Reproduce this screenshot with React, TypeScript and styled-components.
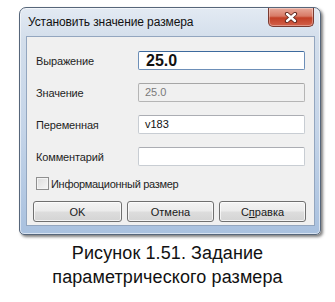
import React from "react";
import styled, { createGlobalStyle } from "styled-components";

const GlobalStyle = createGlobalStyle`
  html, body {
    margin: 0;
    padding: 0;
    background: #ffffff;
  }
  body {
    font-family: "Liberation Sans", Arial, sans-serif;
  }
`;

const Page = styled.div`
  width: 335px;
  height: 302px;
  overflow: hidden;
  background: #ffffff;
`;

const Window = styled.div`
  box-sizing: border-box;
  width: 302px;
  height: 228px;
  margin: 7px 0 0 19px;
  border: 1px solid #56667a;
  border-radius: 7px 7px 5px 5px;
  background: linear-gradient(
    to bottom,
    #e3eaf3 0%,
    #d3deeb 14%,
    #c4d4e8 55%,
    #a9c1df 100%
  );
  box-shadow: inset 0 0 0 1px rgba(255, 255, 255, 0.55),
    2px 2px 3px rgba(0, 0, 0, 0.5);
  display: flex;
  flex-direction: column;
`;

const TitleBar = styled.div`
  height: 28px;
  display: flex;
  justify-content: space-between;
  align-items: flex-start;
  padding: 0 6px 0 8px;
`;

const Title = styled.div`
  font-size: 12px;
  color: #111111;
  line-height: 28px;
  letter-spacing: -0.1px;
`;

const CloseButton = styled.div`
  width: 46px;
  height: 19px;
  box-sizing: border-box;
  border: 1px solid #7a3a30;
  border-top: none;
  border-radius: 0 0 5px 5px;
  background: linear-gradient(
    to bottom,
    #e8a99a 0%,
    #d87a66 45%,
    #c23f26 55%,
    #d2614a 100%
  );
  box-shadow: inset 0 0 0 1px rgba(255, 255, 255, 0.35);
  display: flex;
  align-items: center;
  justify-content: center;
`;

const Body = styled.div`
  padding: 0 5px 8px 6px;
`;

const Panel = styled.div`
  box-sizing: border-box;
  height: 190px;
  border: 1px solid #93a6bf;
  background: #f0f0f0;
  padding: 14px 9px 0 9px;
  display: flex;
  flex-direction: column;
`;

const Fields = styled.div`
  display: grid;
  grid-template-columns: 102px 1fr;
  row-gap: 13px;
  align-items: center;
`;

const Label = styled.div`
  font-size: 11px;
  color: #1e1e1e;
  letter-spacing: -0.15px;
`;

const Input = styled.div<{ $disabled?: boolean; $focused?: boolean; $big?: boolean }>`
  box-sizing: border-box;
  height: 19px;
  border: 1px solid
    ${(p) => (p.$focused ? "#6d8fb8" : p.$disabled ? "#b5b5b5" : "#c8cdd3")};
  border-top-color: ${(p) =>
    p.$focused ? "#3d6a9e" : p.$disabled ? "#a6a6a6" : "#abadb3"};
  border-radius: 2px;
  background: ${(p) => (p.$disabled ? "#f0f0f0" : "#ffffff")};
  color: ${(p) => (p.$disabled ? "#7a7a7a" : "#111111")};
  font-size: ${(p) => (p.$big ? "16px" : "11px")};
  font-weight: ${(p) => (p.$big ? 700 : 400)};
  line-height: 17px;
  padding-left: ${(p) => (p.$big ? "7px" : "6px")};
`;

const CheckRow = styled.label`
  display: flex;
  align-items: center;
  gap: 2px;
  margin-top: 11px;
  font-size: 11px;
  letter-spacing: -0.3px;
  color: #1e1e1e;
`;

const CheckBox = styled.span`
  box-sizing: border-box;
  width: 13px;
  height: 13px;
  border: 1px solid #8f8f8f;
  background: linear-gradient(135deg, #dcdcdc 0%, #f6f6f6 100%);
  box-shadow: inset 0 0 0 1px #f4f4f4;
`;

const Buttons = styled.div`
  display: grid;
  grid-template-columns: 89px 87px 87px;
  justify-content: space-between;
  margin: 11px -1px 0 -3px;
`;

const Button = styled.div`
  box-sizing: border-box;
  height: 21px;
  border: 1px solid #707070;
  border-radius: 3px;
  background: linear-gradient(
    to bottom,
    #f4f4f4 0%,
    #ebebeb 48%,
    #dddddd 52%,
    #d4d4d4 100%
  );
  box-shadow: inset 0 0 0 1px rgba(255, 255, 255, 0.7);
  font-size: 11px;
  color: #1a1a1a;
  display: flex;
  align-items: center;
  justify-content: center;
`;

const Caption = styled.div`
  margin-top: 6px;
  text-align: center;
  font-size: 18px;
  line-height: 24px;
  letter-spacing: 0.1px;
  color: #111111;
`;

export default function App() {
  return (
    <Page>
      <GlobalStyle />
      <Window>
        <TitleBar>
          <Title>Установить значение размера</Title>
          <CloseButton>
            <svg width="14" height="11" viewBox="0 0 14 11">
              <path d="M3 2 L11 9 M11 2 L3 9" stroke="#5a231a" strokeWidth="4.2" strokeLinecap="round" />
              <path d="M3 2 L11 9 M11 2 L3 9" stroke="#ffffff" strokeWidth="2.4" strokeLinecap="round" />
            </svg>
          </CloseButton>
        </TitleBar>
        <Body>
          <Panel>
            <Fields>
              <Label>Выражение</Label>
              <Input $focused $big>25.0</Input>
              <Label>Значение</Label>
              <Input $disabled>25.0</Input>
              <Label>Переменная</Label>
              <Input>v183</Input>
              <Label>Комментарий</Label>
              <Input />
            </Fields>
            <CheckRow>
              <CheckBox />
              Информационный размер
            </CheckRow>
            <Buttons>
              <Button>OK</Button>
              <Button>Отмена</Button>
              <Button>
                С<u>п</u>равка
              </Button>
            </Buttons>
          </Panel>
        </Body>
      </Window>
      <Caption>
        Рисунок 1.51. Задание
        <br />
        параметрического размера
      </Caption>
    </Page>
  );
}
